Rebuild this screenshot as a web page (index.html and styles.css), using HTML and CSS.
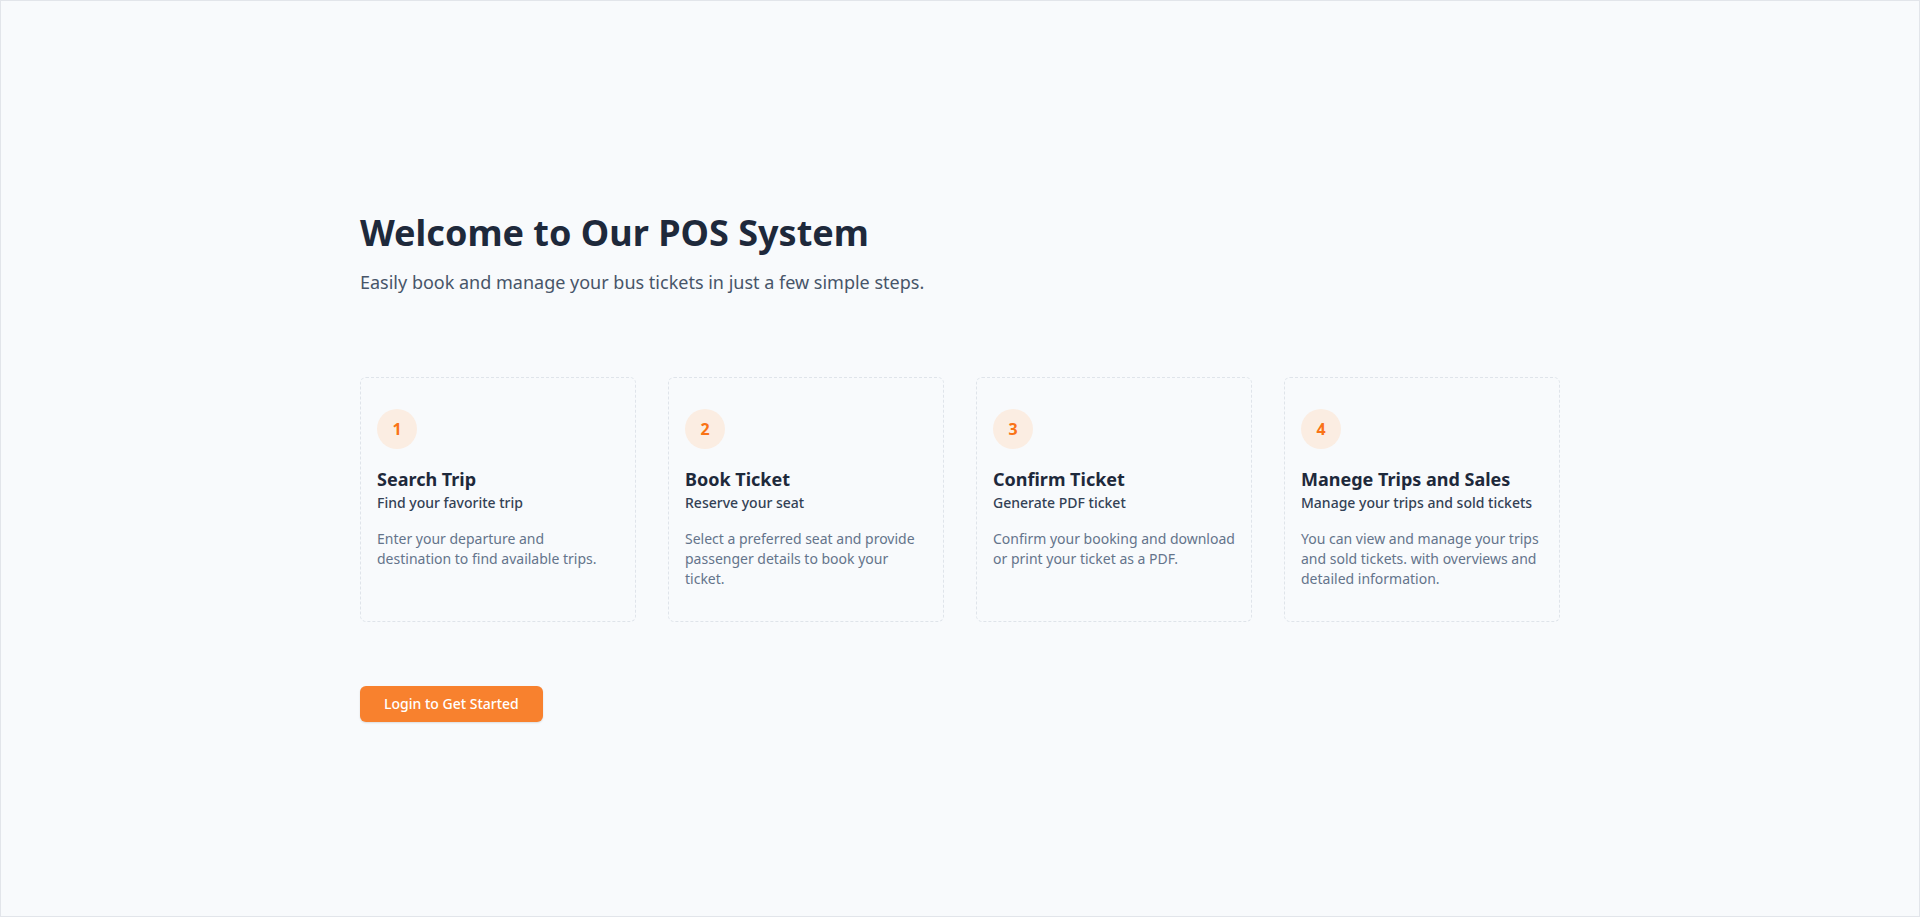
FILE: index.html
```html
<!DOCTYPE html>
<html lang="en">
<head>
<meta charset="utf-8">
<title>Welcome to Our POS System</title>
<link rel="stylesheet" href="styles.css">
</head>
<body>
<div class="page">
  <main class="container">
    <header class="intro">
      <h1 class="title">Welcome to Our POS System</h1>
      <p class="lead">Easily book and manage your bus tickets in just a few simple steps.</p>
    </header>

    <section class="steps">
      <div class="card">
        <div class="badge">1</div>
        <h3 class="card-title">Search Trip</h3>
        <p class="card-sub">Find your favorite trip</p>
        <p class="card-text">Enter your departure and destination to find available trips.</p>
      </div>
      <div class="card">
        <div class="badge">2</div>
        <h3 class="card-title">Book Ticket</h3>
        <p class="card-sub">Reserve your seat</p>
        <p class="card-text">Select a preferred seat and provide passenger details to book your ticket.</p>
      </div>
      <div class="card">
        <div class="badge">3</div>
        <h3 class="card-title">Confirm Ticket</h3>
        <p class="card-sub">Generate PDF ticket</p>
        <p class="card-text">Confirm your booking and download or print your ticket as a PDF.</p>
      </div>
      <div class="card">
        <div class="badge">4</div>
        <h3 class="card-title">Manege Trips and Sales</h3>
        <p class="card-sub">Manage your trips and sold tickets</p>
        <p class="card-text">You can view and manage your trips and sold tickets. with overviews and detailed information.</p>
      </div>
    </section>

    <div class="actions">
      <button class="btn" type="button">Login to Get Started</button>
    </div>
  </main>
</div>
</body>
</html>
```

FILE: styles.css
```css
* { box-sizing: border-box; }

html, body {
  margin: 0;
  padding: 0;
  height: 100%;
}

body {
  font-family: "Noto Sans", "Open Sans", sans-serif;
  background: #f8fafc;
  color: #1e293b;
}

.page {
  min-height: 100vh;
  border: 1px solid #e2e5ea;
  padding-top: 212px;
}

.container {
  width: 1200px;
  margin: 0 auto;
}

.title {
  margin: 0;
  font-size: 36px;
  line-height: 40px;
  font-weight: 700;
  color: #1e293b;
}

.lead {
  margin: 15px 0 0;
  font-size: 18px;
  line-height: 28px;
  color: #475569;
}

.steps {
  margin-top: 81px;
  display: grid;
  grid-template-columns: repeat(4, 1fr);
  gap: 32px;
}

.card {
  border: 1px dashed #dfe4ea;
  border-radius: 6px;
  padding: 31px 16px 32px;
}

.badge {
  width: 40px;
  height: 40px;
  border-radius: 50%;
  background: #fbede2;
  color: #f97316;
  font-size: 16px;
  font-weight: 700;
  display: flex;
  align-items: center;
  justify-content: center;
  margin-bottom: 16px;
}

.card-title {
  margin: 0;
  font-size: 18px;
  line-height: 28px;
  font-weight: 700;
  color: #1e293b;
}

.card-sub {
  margin: 0;
  font-size: 14px;
  line-height: 20px;
  font-weight: 500;
  color: #334155;
}

.card-text {
  margin: 16px 0 0;
  font-size: 14px;
  line-height: 20px;
  color: #64748b;
}

.actions {
  margin-top: 64px;
}

.btn {
  font-family: inherit;
  font-size: 14px;
  line-height: 20px;
  font-weight: 500;
  color: #ffffff;
  background: #f8812e;
  border: none;
  border-radius: 6px;
  padding: 8px 24px;
  box-shadow: 0 1px 2px rgba(0, 0, 0, 0.12);
  cursor: pointer;
}
```
